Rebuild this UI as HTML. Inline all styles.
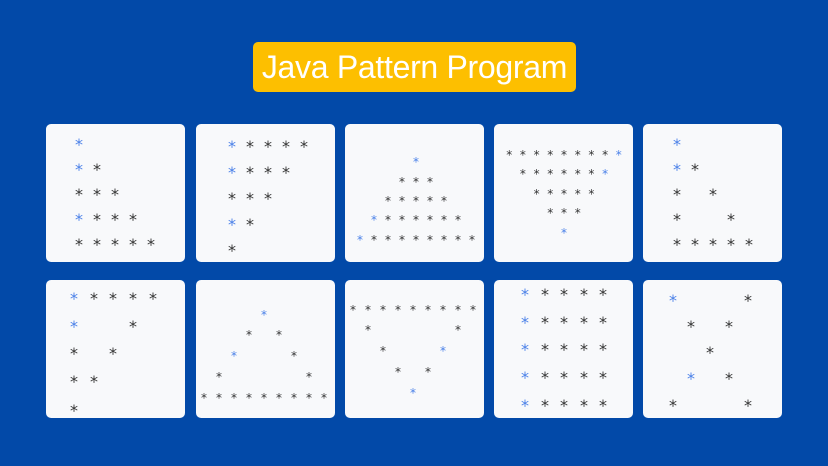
<!DOCTYPE html>
<html><head><meta charset="utf-8"><style>
body{margin:0;width:828px;height:466px;background:#0249a8;position:relative;overflow:hidden;font-family:"DejaVu Sans",sans-serif}
.t{position:absolute;left:253px;top:42px;width:323px;height:50px;background:#fdbf00;border-radius:5px;color:#fff;font:32px "Liberation Sans",sans-serif;text-align:center;line-height:50px;letter-spacing:-0.3px}
.c{position:absolute;width:139px;height:138px;background:#f8f9fb;border-radius:5px}
i{position:absolute;font-style:normal;width:20px;margin-left:-10px;text-align:center;line-height:1;color:#333;font-size:16px;margin-top:-6px}
i.s{font-size:12px;margin-top:-4px}
i.b{color:#4a80e8}
</style></head><body>
<div class="t">Java Pattern Program</div>
<div class="c" style="left:46px;top:124px"></div>
<div class="c" style="left:196px;top:124px"></div>
<div class="c" style="left:345px;top:124px"></div>
<div class="c" style="left:494px;top:124px"></div>
<div class="c" style="left:643px;top:124px"></div>
<div class="c" style="left:46px;top:280px"></div>
<div class="c" style="left:196px;top:280px"></div>
<div class="c" style="left:345px;top:280px"></div>
<div class="c" style="left:494px;top:280px"></div>
<div class="c" style="left:643px;top:280px"></div>
<div id="p"></div>
<script>
var h='';
function a(x,y,c){h+='<i class="'+(c||'')+'" style="left:'+x+'px;top:'+y+'px">*</i>';}
var X=[79,97,115,133,151],Y=[143,168,193,218,243];
a(79,143,'b');a(79,168,'b');a(97,168);a(79,193);a(97,193);a(115,193);a(79,218,'b');a(97,218);a(115,218);a(133,218);
for(var i=0;i<5;i++)a(X[i],243);
X=[232,250,268,286,304];Y=[145,171,197,223,249];
for(var r=0;r<5;r++){var n=5-r;for(var i=0;i<n;i++)a(X[i],Y[r],(i==0&&(r==0||r==1||r==3))?'b':'');}
Y=[160,180,199,218,238];
for(var r=0;r<5;r++){var n=2*r+1;for(var i=0;i<n;i++){var x=416+(i-(n-1)/2)*14;var c='s';if(i==0&&(r==0||r>=3))c+=' b';a(x,Y[r],c);}}
Y=[153,172,192,211,231];
for(var r=0;r<5;r++){var n=9-2*r;for(var i=0;i<n;i++){var x=564+(i-(n-1)/2)*13.7;var c='s';if(i==n-1&&(r==0||r==1||r==4))c+=' b';a(x,Y[r],c);}}
X=[677,695,713,731,749];Y=[143,168,193,218,243];
a(677,143,'b');a(677,168,'b');a(695,168);a(677,193);a(713,193);a(677,218);a(731,218);for(var i=0;i<5;i++)a(X[i],243);
X=[74,94,113,133,153];Y=[297,325,352,380,409];
a(74,297,'b');for(var i=1;i<5;i++)a(X[i],297);a(74,325,'b');a(133,325);a(74,352);a(113,352);a(74,380);a(94,380);a(74,409);
a(264,313,'s b');a(249,333,'s');a(279,333,'s');a(234,354,'s b');a(294,354,'s');a(219,375,'s');a(309,375,'s');
for(var i=0;i<9;i++)a(204+15*i,396,'s');
for(var i=0;i<9;i++)a(353+15*i,308,'s');
a(368,328,'s');a(458,328,'s');a(383,349,'s');a(443,349,'s b');a(398,370,'s');a(428,370,'s');a(413,391,'s b');
X=[525,545,564,584,603];Y=[293,321,348,376,404];
for(var r=0;r<5;r++)for(var i=0;i<5;i++)a(X[i],Y[r],i==0?'b':'');
a(673,299,'b');a(748,299);a(691,325);a(729,325);a(710,351);a(691,377,'b');a(729,377);a(673,404);a(748,404);
document.getElementById('p').innerHTML=h;
</script>
</body></html>
